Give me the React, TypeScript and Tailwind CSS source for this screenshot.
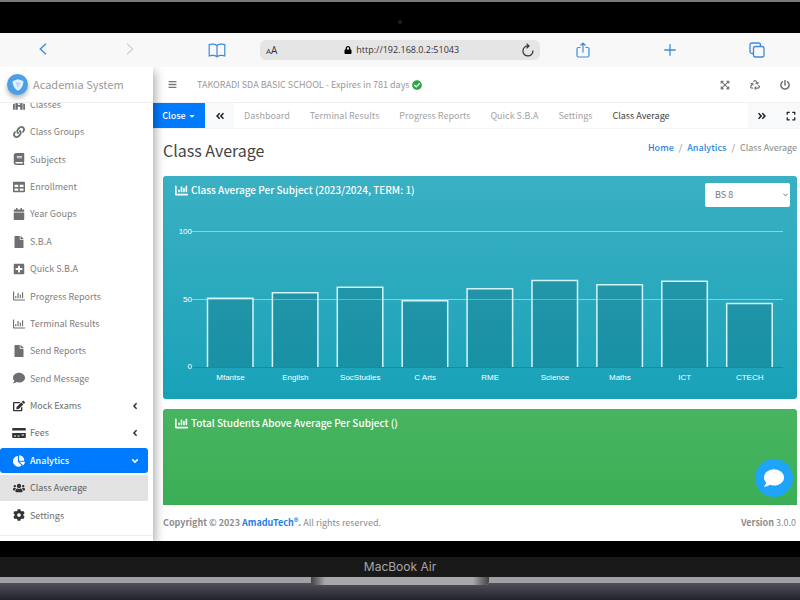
import { useState } from 'react';
import type { ReactNode } from 'react';
import type { IconType } from 'react-icons';
import {
  FaAngleDoubleLeft,
  FaAngleDoubleRight,
  FaAngleDown,
  FaAngleLeft,
  FaBars,
  FaBook,
  FaCalendar,
  FaCaretDown,
  FaChartBar,
  FaChartPie,
  FaCheckCircle,
  FaCog,
  FaComment,
  FaEdit,
  FaExpand,
  FaExpandArrowsAlt,
  FaFile,
  FaLink,
  FaLock,
  FaPlusSquare,
  FaPowerOff,
  FaRecycle,
  FaRegChartBar,
  FaSchool,
  FaTable,
  FaUsers,
} from 'react-icons/fa';

interface NavItem {
  label: string;
  icon: IconType;
  tone?: 'dark' | 'active' | 'current';
  arrow?: 'left' | 'down';
}

// Card with a reader slot, used for the fees menu
function FeesIcon({ className }: { className?: string }) {
  return (
    <svg viewBox="0 0 14 12" className={className} fill="currentColor">
      <path d="M1 1h12a.8.8 0 0 1 .8.8V3.5H.2V1.8A.8.8 0 0 1 1 1z" />
      <path
        fillRule="evenodd"
        d="M.2 6h13.6v4.200a.8.8 0 0 1-.8.8H1a.8.8 0 0 1-.8-.8zM2 8.500v1h2v-1zM5.500 8.500v1h2v-1zM9.500 7.500v1h2.500v-1z"
      />
    </svg>
  );
}

const navItems: NavItem[] = [
  { label: 'Classes', icon: FaSchool },
  { label: 'Class Groups', icon: FaLink },
  { label: 'Subjects', icon: FaBook },
  { label: 'Enrollment', icon: FaTable },
  { label: 'Year Goups', icon: FaCalendar },
  { label: 'S.B.A', icon: FaFile },
  { label: 'Quick S.B.A', icon: FaPlusSquare },
  { label: 'Progress Reports', icon: FaRegChartBar },
  { label: 'Terminal Results', icon: FaRegChartBar },
  { label: 'Send Reports', icon: FaFile },
  { label: 'Send Message', icon: FaComment },
  { label: 'Mock Exams', icon: FaEdit, tone: 'dark', arrow: 'left' },
  { label: 'Fees', icon: FeesIcon as IconType, tone: 'dark', arrow: 'left' },
  { label: 'Analytics', icon: FaChartPie, tone: 'active', arrow: 'down' },
  { label: 'Class Average', icon: FaUsers, tone: 'current' },
  { label: 'Settings', icon: FaCog, tone: 'dark' },
];

const tones = {
  normal: 'text-[#808080]',
  dark: 'text-[#6c6c6c]',
  active: 'rounded-[3px] bg-[#007bff] font-medium text-white',
  current: 'bg-[#e3e3e3] text-[#606060]',
};

const iconTones = {
  normal: 'text-[#6f6f6f]',
  dark: 'text-[#333]',
  active: 'text-white',
  current: 'text-[#333]',
};

const tabs = ['Dashboard', 'Terminal Results', 'Progress Reports', 'Quick S.B.A', 'Settings', 'Class Average'];

const averages = [
  { subject: 'Mfantse', value: 51 },
  { subject: 'English', value: 55 },
  { subject: 'SocStudies', value: 59 },
  { subject: 'C Arts', value: 49 },
  { subject: 'RME', value: 58 },
  { subject: 'Science', value: 64 },
  { subject: 'Maths', value: 61 },
  { subject: 'ICT', value: 63.5 },
  { subject: 'CTECH', value: 47 },
];

function BrowserBar() {
  return (
    <div className="grid h-[34px] shrink-0 grid-cols-[260px_1fr_260px] items-center bg-[#f8f8f8] text-[#3b8ddb]">
      <div className="grid grid-cols-3">
        <button aria-label="Back" className="flex justify-center">
          <svg viewBox="0 0 8 12" className="h-3 w-2" fill="none" stroke="currentColor" strokeWidth="1.4">
            <path d="M7 .8 1.300 6 7 11.200" />
          </svg>
        </button>
        <button aria-label="Forward" className="flex justify-center text-[#d2d2d2]">
          <svg viewBox="0 0 8 12" className="h-3 w-2" fill="none" stroke="currentColor" strokeWidth="1.2">
            <path d="M1 .8 6.700 6 1 11.200" />
          </svg>
        </button>
        <button aria-label="Bookmarks" className="flex justify-center">
          <svg viewBox="0 0 18 15" className="h-[15px] w-[18px]" fill="none" stroke="currentColor" strokeWidth="1.2">
            <path d="M9 2.500C7.500.9 3.500.7 1.200 1.600v11.300C3.500 12 7.500 12.200 9 13.800 10.500 12.200 14.500 12 16.800 12.900V1.600C14.500.7 10.500.9 9 2.500zM9 2.500v11.300" />
          </svg>
        </button>
      </div>
      <div className="flex h-5 items-center justify-between rounded-md bg-[#e5e5e6] px-[6px] font-['Open_Sans',sans-serif] text-[#333]">
        <span className="flex items-baseline">
          <span className="text-[8px]">A</span>
          <span className="text-[10px]">A</span>
        </span>
        <span className="flex items-center gap-1 pl-1 text-[9px]">
          <FaLock className="size-2 text-black" />
          http://192.168.0.2:51043
        </span>
        <button aria-label="Reload">
          <svg viewBox="0 0 12 14" className="h-[14px] w-3" fill="none" stroke="currentColor" strokeWidth="1.2">
            <path d="M10.900 7.500A5 5 0 1 1 6.500 3M4.600.6 7 3 4.600 5.400" />
          </svg>
        </button>
      </div>
      <div className="grid grid-cols-3 items-center">
        <button aria-label="Share" className="flex justify-center">
          <svg viewBox="0 0 14 16" className="h-4 w-[14px]" fill="none" stroke="currentColor" strokeWidth="1.2">
            <path d="M4.500 5.500H2.500A1.500 1.500 0 0 0 1 7v6.500A1.500 1.500 0 0 0 2.500 15h9a1.500 1.500 0 0 0 1.500-1.500V7a1.500 1.500 0 0 0-1.500-1.500h-2M7 10.500V1M4.500 3.500 7 1l2.500 2.500" />
          </svg>
        </button>
        <button aria-label="New tab" className="flex justify-center">
          <svg viewBox="0 0 12 12" className="size-3" fill="none" stroke="currentColor" strokeWidth="1.3">
            <path d="M6 .3v11.400M.3 6h11.400" />
          </svg>
        </button>
        <button aria-label="All tabs" className="flex justify-center">
          <svg viewBox="0 0 16 16" className="size-4" fill="none" stroke="currentColor" strokeWidth="1.3">
            <rect x="4.500" y="4.500" width="10.500" height="10.500" rx="2" />
            <path d="M4.500 11.500H3a2 2 0 0 1-2-2V3a2 2 0 0 1 2-2h6.500a2 2 0 0 1 2 2v1.500" />
          </svg>
        </button>
      </div>
    </div>
  );
}

function Sidebar() {
  return (
    <aside className="z-10 flex w-[153px] shrink-0 flex-col bg-white shadow-[2px_4px_10px_rgba(0,0,0,0.35)]">
      <a
        href="#"
        className="z-10 flex h-9 shrink-0 items-center gap-[5px] border-b border-[#eee] bg-white pl-[7px] text-[11px] text-[#999]"
      >
        <span className="flex size-[21px] items-center justify-center rounded-full bg-[#4a9fe8] shadow-[0_3px_5px_rgba(0,0,0,0.3)]">
          <svg viewBox="0 0 12 12" className="size-3">
            <path d="M6 .3 11.300 2C11.500 6 9.800 9.800 6 11.800 2.200 9.800.5 6 .7 2z" fill="#e3f1fd" />
            <path d="M3.500 3.500h5L6 9z" fill="#b5d7f5" />
          </svg>
        </span>
        Academia System
      </a>
      <nav className="flex min-h-0 flex-1 flex-col overflow-hidden">
        <ul className="-mt-3 flex flex-1 flex-col">
          {navItems.map(({ label, icon: Icon, tone = 'normal', arrow }) => (
            <li key={label} className="flex-1 pt-px pr-[5px] pb-px">
              <a href="#" className={`flex h-full items-center pr-2 pl-3 text-[9px] ${tones[tone]}`}>
                <span className={`mr-[5px] flex w-[13px] justify-center text-[12px] ${iconTones[tone]}`}>
                  <Icon className={label === 'Fees' ? 'h-3 w-[14px] shrink-0' : 'shrink-0'} />
                </span>
                {label}
                {arrow === 'left' && <FaAngleLeft className="ml-auto text-[10px] text-[#333]" />}
                {arrow === 'down' && <FaAngleDown className="ml-auto text-[10px]" />}
              </a>
            </li>
          ))}
        </ul>
        <div className="mt-[6px] h-[6px] border-t border-[#eee]" />
      </nav>
    </aside>
  );
}

function AverageChart() {
  const y = (value: number) => 152 - value * 1.35;

  return (
    <svg viewBox="0 0 634 184" className="block w-full" role="img" aria-label="Class average per subject">
      <g stroke="#fff" strokeOpacity="0.45">
        <path d="M29 16.500h591M29 84.500h591" />
      </g>
      <path d="M29 152.500h591" stroke="#000" strokeOpacity="0.15" />
      <g fill="#fff" className="font-['Liberation_Sans',Arial,sans-serif] text-[8px]">
        {[0, 50, 100].map((tick) => (
          <text key={tick} x="29" y={y(tick) + 2} textAnchor="end">
            {tick}
          </text>
        ))}
        {averages.map(({ subject, value }, i) => {
          const x = 44.5 + i * 64.9;
          return (
            <g key={subject}>
              <path
                d={`M${x} 152V${y(value)}h45.500V152`}
                fill="#004655"
                fillOpacity="0.2"
                stroke="#d5f4f8"
                strokeWidth="1.5"
              />
              <text x={x + 23} y="165" textAnchor="middle">
                {subject}
              </text>
            </g>
          );
        })}
      </g>
    </svg>
  );
}

function CardTitle({ children }: { children: ReactNode }) {
  return (
    <h2 className="flex items-center gap-[3px] text-[10px] leading-[14px] font-medium">
      <FaChartBar className="size-[13px]" />
      {children}
    </h2>
  );
}

function Main() {
  const [activeTab, setActiveTab] = useState('Class Average');

  return (
    <div className="flex min-w-0 flex-1 flex-col bg-white">
      <header className="flex h-9 shrink-0 items-center border-b border-[#f0f0f0] pr-[10px] pl-[15px] text-[9px] text-[#999]">
        <button aria-label="Toggle menu">
          <FaBars className="text-[#777]" />
        </button>
        <span className="ml-5">TAKORADI SDA BASIC SCHOOL - Expires in 781 days</span>
        <FaCheckCircle className="ml-[2px] text-[10px] text-[#28a745]" />
        <div className="ml-auto flex gap-5 text-[10px] text-[#777]">
          <button aria-label="Full screen">
            <FaExpandArrowsAlt />
          </button>
          <button aria-label="Refresh">
            <FaRecycle />
          </button>
          <button aria-label="Log out">
            <FaPowerOff />
          </button>
        </div>
      </header>

      <div className="flex h-[26px] shrink-0 border-b border-[#f4f4f4] text-[9px]">
        <button className="flex w-[52px] items-center justify-center gap-[2px] bg-[#007bff] font-medium text-white">
          Close <FaCaretDown className="size-2" />
        </button>
        <button
          aria-label="Scroll tabs left"
          className="flex w-[29px] items-center justify-center bg-[#f8f9fa] text-[10px] text-[#222]"
        >
          <FaAngleDoubleLeft />
        </button>
        <div role="tablist" className="flex min-w-0 flex-1 overflow-hidden">
          {tabs.map((tab) => (
            <button
              key={tab}
              role="tab"
              aria-selected={tab === activeTab}
              onClick={() => setActiveTab(tab)}
              className={`px-[10px] whitespace-nowrap ${tab === activeTab ? 'text-[#444]' : 'text-[#a3a3a3]'}`}
            >
              {tab}
            </button>
          ))}
        </div>
        <div className="flex w-[52px] items-center justify-between bg-[#f8f9fa] pr-1 pl-[9px] text-[10px] text-[#222]">
          <button aria-label="Scroll tabs right">
            <FaAngleDoubleRight />
          </button>
          <button aria-label="Expand tab">
            <FaExpand />
          </button>
        </div>
      </div>

      <main className="min-h-0 flex-1 overflow-hidden pr-[3px] pl-[10px]">
        <div className="flex h-[47px] items-start justify-between pt-[9px]">
          <h1 className="text-[16px] leading-6 text-[#444]">Class Average</h1>
          <nav aria-label="Breadcrumb" className="flex gap-[5px] text-[9px] leading-5 text-[#888]">
            <a href="#" className="font-medium text-[#2d86e0]">
              Home
            </a>
            <span>/</span>
            <a href="#" className="font-medium text-[#2d86e0]">
              Analytics
            </a>
            <span>/</span>
            <span>Class Average</span>
          </nav>
        </div>

        <section className="rounded-[3px] bg-linear-to-b from-[#3ab0c3] to-[#17a2b8] text-white">
          <div className="flex h-[39px] items-start justify-between pt-[7px] pr-[7px] pl-3">
            <CardTitle>Class Average Per Subject (2023/2024, TERM: 1)</CardTitle>
            <div className="relative">
              <select
                aria-label="Class"
                defaultValue="BS 8"
                className="block h-6 w-[85px] appearance-none rounded-[2px] bg-white pl-[10px] text-[9px] text-[#777]"
              >
                <option>BS 7</option>
                <option>BS 8</option>
                <option>BS 9</option>
              </select>
              <svg viewBox="0 0 6 4" className="absolute top-[10px] right-[2px] h-1 w-[5px]" fill="none" stroke="#555">
                <path d="M.5.5 3 3 5.500.5" />
              </svg>
            </div>
          </div>
          <AverageChart />
        </section>

        <section className="mt-[10px] h-[223px] rounded-[3px] bg-linear-to-b from-[#48b461] to-[#28a745] pt-[7px] pl-3 text-white">
          <CardTitle>Total Students Above Average Per Subject ()</CardTitle>
        </section>
      </main>

      <footer className="flex h-9 shrink-0 items-center justify-between pr-1 pl-[10px] text-[9px] text-[#8c8c8c]">
        <span>
          <strong>
            Copyright © 2023{' '}
            <a href="#" className="text-[#1f7fe8]">
              AmaduTech®
            </a>
            .
          </strong>{' '}
          All rights reserved.
        </span>
        <span>
          <strong>Version</strong> 3.0.0
        </span>
      </footer>
    </div>
  );
}

export default function App() {
  return (
    <div className="flex h-screen flex-col bg-black font-['Noto_Sans_CJK_SC',sans-serif]">
      <div className="flex h-[33px] shrink-0 items-center justify-center border-t-2 border-[#77787a] pt-2">
        <span className="size-1 rounded-full bg-[#222]" />
      </div>

      <div className="relative flex min-h-0 flex-1 flex-col overflow-hidden">
        <BrowserBar />
        <div className="flex min-h-0 flex-1 overflow-hidden">
          <Sidebar />
          <Main />
        </div>
        <button
          aria-label="Open chat"
          className="absolute right-[7px] bottom-11 z-20 flex size-[38px] items-center justify-center rounded-full bg-[#1ea5fb] text-white"
        >
          <FaComment className="size-5" />
        </button>
      </div>

      <div className="shrink-0">
        <div className="h-4 bg-black" />
        <div className="flex h-5 items-center justify-center bg-[#191919] font-['Inter',sans-serif] text-[12px] text-[#a6a6a8]">
          MacBook Air
        </div>
        <div className="grid h-[23px] grid-cols-[1fr_178px_1fr] items-start bg-linear-to-b from-[#62636a] to-[#22222e]">
          <div className="h-[6px] bg-[#a1a1a5]" />
          <div className="h-2 rounded-b-[4px] bg-linear-to-r from-[#444] via-[#a8a8ac] via-8% to-[#a8a8ac] to-92%">
            <div className="ml-auto h-full w-4 rounded-br-[4px] bg-linear-to-r from-[#a8a8ac] to-[#444]" />
          </div>
          <div className="h-[6px] bg-[#a1a1a5]" />
        </div>
      </div>
    </div>
  );
}
